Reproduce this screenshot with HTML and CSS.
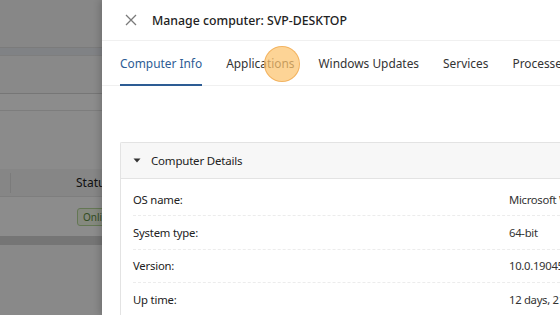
FILE: index.html
```html
<!DOCTYPE html>
<html>
<head>
<meta charset="utf-8">
<link rel="stylesheet" href="styles.css">
</head>
<body>
<div class="page">
  <div class="bg-top"></div>
  <div class="bg-band"></div>
  <div class="bg-gap"></div>
  <div class="bg-strip"></div>
  <div class="bg-gap2"></div>
  <div class="bg-thead"><span class="bg-div"></span><span class="bg-th">Status</span></div>
  <div class="bg-row"><span class="badge">Online</span></div>
  <div class="bg-dark"></div>
  <div class="bg-rest"></div>
</div>
<div class="overlay"></div>
<aside class="drawer">
  <header class="drawer-head">
    <svg class="close" width="12" height="12" viewBox="0 0 12 12"><path d="M1 1L11 11M11 1L1 11" stroke="#7a7a7a" stroke-width="1.3" fill="none"/></svg>
    <h1 class="title">Manage computer: SVP-DESKTOP</h1>
  </header>
  <nav class="tabs">
    <span class="tab active">Computer Info</span>
    <span class="tab">Applications</span>
    <span class="tab">Windows Updates</span>
    <span class="tab">Services</span>
    <span class="tab">Processes</span>
    <span class="click-dot"></span>
  </nav>
  <section class="card">
    <div class="card-head">
      <svg class="caret" width="8" height="5" viewBox="0 0 8 5"><path d="M0.5 0.5H7.5L4 4.5Z" fill="#333"/></svg>
      <span>Computer Details</span>
    </div>
    <div class="rows">
      <div class="row"><span class="label">OS name:</span><span class="value">Microsoft Windows 10 Pro</span></div>
      <div class="row"><span class="label">System type:</span><span class="value">64-bit</span></div>
      <div class="row"><span class="label">Version:</span><span class="value">10.0.19045</span></div>
      <div class="row"><span class="label">Up time:</span><span class="value">12 days, 21 hours</span></div>
    </div>
  </section>
</aside>
</body>
</html>
```

FILE: styles.css
```css
html, body {
  margin: 0;
  padding: 0;
  width: 560px;
  height: 315px;
  overflow: hidden;
  font-family: "Noto Sans", "Open Sans", sans-serif;
}
.page {
  width: 560px;
  height: 315px;
  background: #fff;
  display: flex;
  flex-direction: column;
}
.bg-top { height: 47px; background: #f6f6f6; }
.bg-band { height: 7px; background: #e9edf2; border-top: 1px solid #e0e0e0; }
.bg-gap { height: 37px; background: #fafafa; border-top: 1px solid #e6e6e6; }
.bg-strip { height: 16px; background: #fff; border-top: 1px solid #d8d8d8; border-bottom: 1px solid #e4e4e4; }
.bg-gap2 { height: 58px; background: #fdfdfd; }
.bg-thead {
  height: 27px;
  background: #f5f5f5;
  border-bottom: 1px solid #e6e6e6;
  display: flex;
  align-items: center;
  font-size: 12px;
  color: #222;
}
.bg-div { width: 1px; height: 20px; background: #e0e0e0; margin-left: 10px; }
.bg-th { margin-left: 65px; }
.bg-row { height: 39px; display: flex; align-items: center; background: #fff; }
.badge {
  margin-left: 77px;
  font-size: 10px;
  padding: 1px 5px;
  border: 1px solid #b7d99a;
  background: #f2f9e8;
  color: #5a8a3a;
  border-radius: 3px;
}
.bg-dark { height: 9px; background: #d6d6d6; }
.bg-rest { flex: 1; background: #fafafa; }
.overlay {
  position: absolute;
  left: 0; top: 0;
  width: 560px; height: 315px;
  background: rgba(0,0,0,0.45);
}
.drawer {
  position: absolute;
  left: 102px; top: 0;
  width: 458px; height: 315px;
  background: #fff;
  box-shadow: -3px 0 6px rgba(0,0,0,0.15);
  display: flex;
  flex-direction: column;
  overflow: hidden;
}
.drawer-head {
  height: 40px;
  border-bottom: 1px solid #f0f0f0;
  display: flex;
  align-items: center;
  padding-left: 23px;
  gap: 15px;
  flex-shrink: 0;
}
.close { flex-shrink: 0; }
.title {
  margin: 0;
  font-size: 12.3px;
  font-weight: 500;
  color: #222;
  white-space: nowrap;
}
.tabs {
  position: relative;
  height: 44px;
  border-bottom: 1px solid #f0f0f0;
  display: flex;
  align-items: stretch;
  padding-left: 18px;
  gap: 24px;
  flex-shrink: 0;
  white-space: nowrap;
}
.tab {
  font-size: 11.9px;
  color: #333;
  display: flex;
  align-items: center;
  padding-top: 1px;
  border-bottom: 2px solid transparent;
  margin-bottom: -1px;
  flex-shrink: 0;
}
.tab.active {
  color: #2d5c94;
  border-bottom-color: #2d5c94;
}
.click-dot {
  position: absolute;
  left: 162px;
  top: 5px;
  width: 34px;
  height: 34px;
  border-radius: 50%;
  background: rgba(252, 196, 110, 0.72);
  border: 1px solid rgba(240, 170, 80, 0.8);
}
.card {
  margin: 56px 0 0 18px;
  border: 1px solid #e3e3e3;
  border-right: none;
  border-radius: 2px 0 0 0;
}
.card-head {
  height: 35px;
  background: #f7f7f7;
  border-bottom: 1px solid #e3e3e3;
  display: flex;
  align-items: center;
  padding-left: 12px;
  gap: 10px;
  font-size: 11.5px;
  letter-spacing: -0.2px;
  color: #222;
}
.rows { padding: 4px 0 0 12px; }
.row {
  height: 32.4px;
  display: flex;
  align-items: center;
  border-bottom: 1px dashed #ececec;
  font-size: 11.3px;
  letter-spacing: -0.2px;
  color: #222;
  white-space: nowrap;
}
.label { width: 376px; flex-shrink: 0; }
.value { color: #333; flex-shrink: 0; letter-spacing: -0.3px; }
```
